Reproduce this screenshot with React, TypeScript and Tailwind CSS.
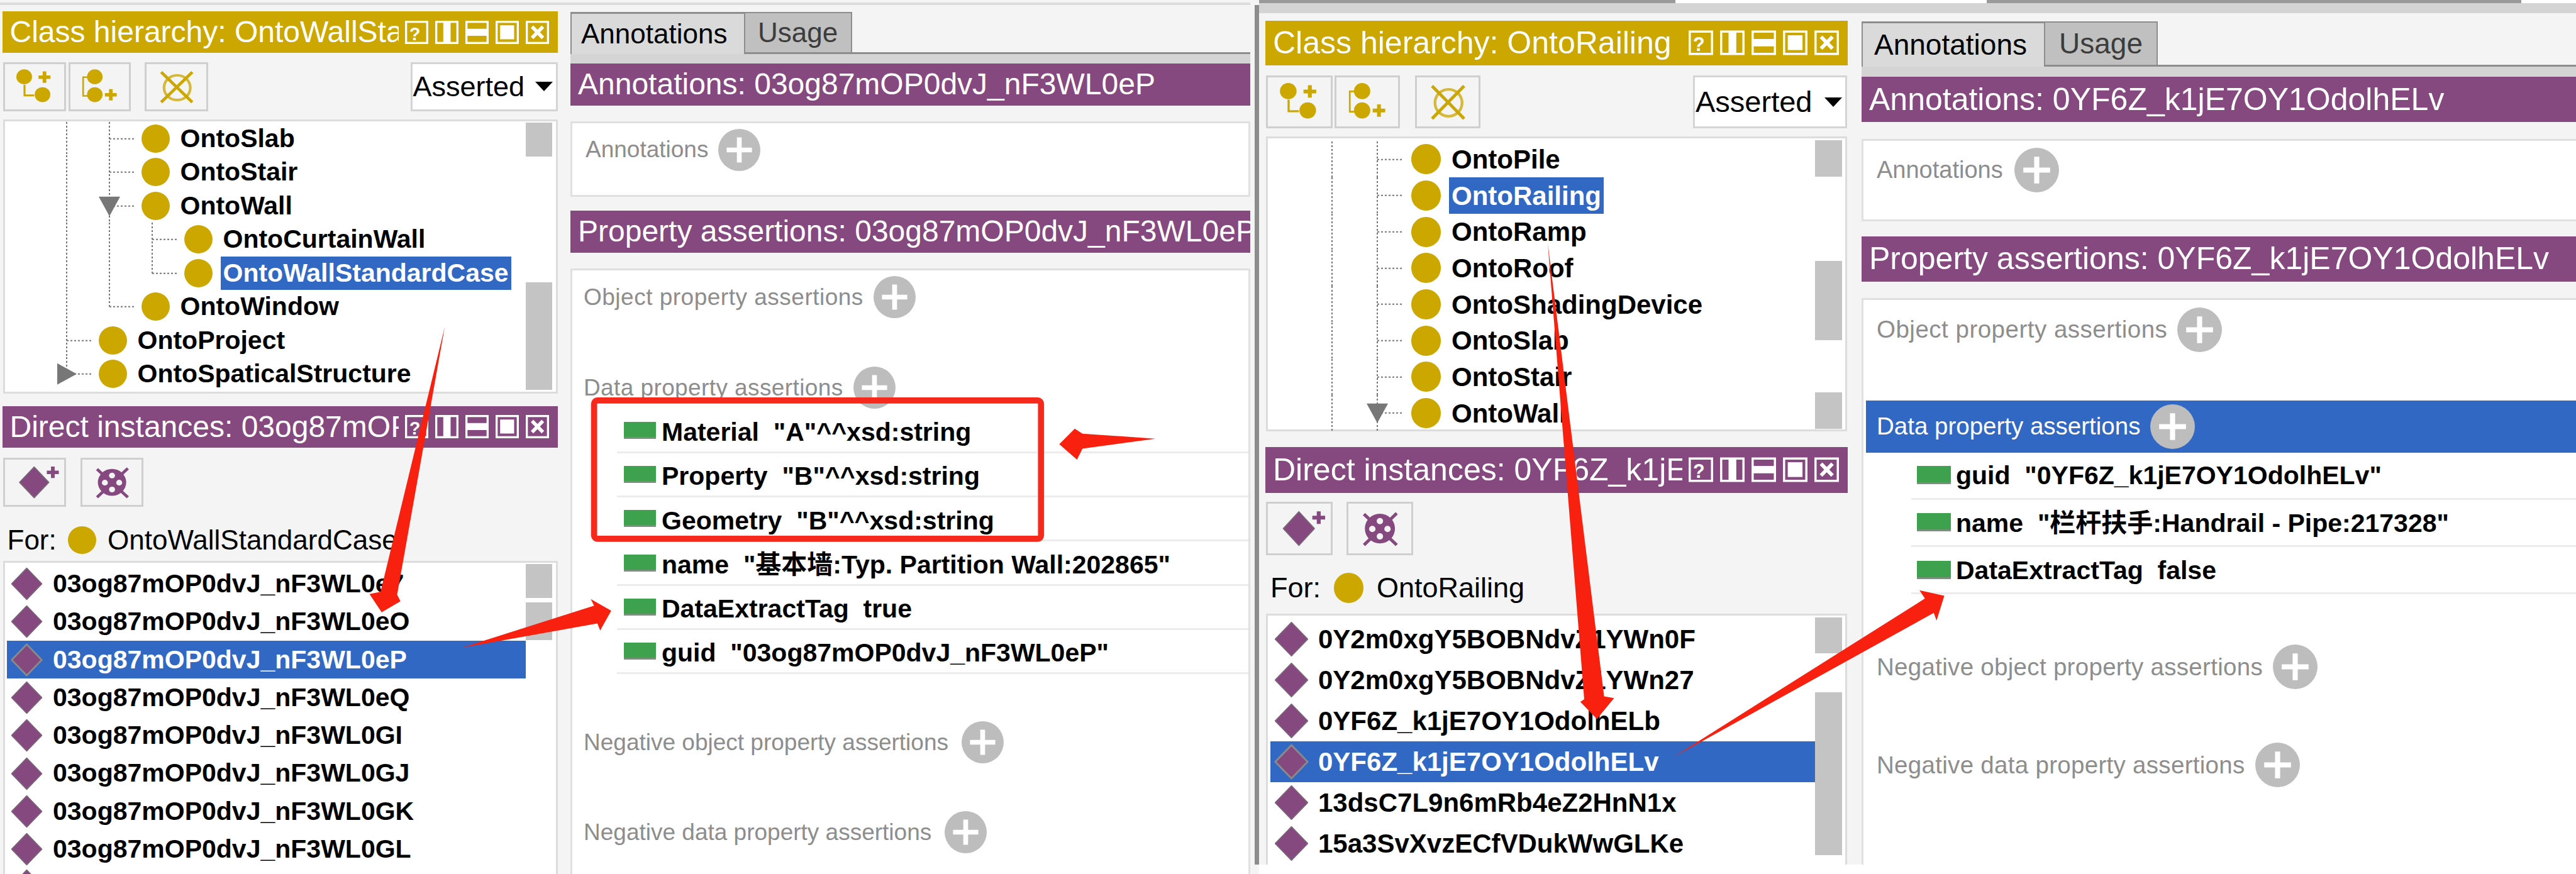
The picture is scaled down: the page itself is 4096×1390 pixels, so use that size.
import React from "react";

const GOLD = "#cca700";
const PURPLE = "#85487f";

// icons of the view bar
function ViewIcons({ size }: { size: string }) {
  const box = <rect x="6" y="6" width="121" height="121" fill="none" stroke="white" strokeWidth="12" />;
  return (
    <>
      <svg viewBox="0 0 133 133" className={size}>
        {box}
        <text x="56" y="110" fontSize="104" fontWeight="700" fill="white" textAnchor="middle" fontFamily="Liberation Sans">?</text>
      </svg>
      <svg viewBox="0 0 133 133" className={size}>
        {box}
        <rect x="46" y="6" width="42" height="121" fill="white" />
      </svg>
      <svg viewBox="0 0 133 133" className={size}>
        {box}
        <rect x="6" y="46" width="121" height="40" fill="white" />
      </svg>
      <svg viewBox="0 0 133 133" className={size}>
        {box}
        <rect x="26" y="26" width="80" height="80" fill="white" />
      </svg>
      <svg viewBox="0 0 133 133" className={size}>
        {box}
        <path d="M36 34 L98 98 M98 34 L36 98" stroke="white" strokeWidth="20" />
      </svg>
    </>
  );
}

function ViewBar({ title, className, iconSize, iconGap }: { title: string; className: string; iconSize: string; iconGap: string }) {
  return (
    <div className={`flex items-center text-white shrink-0 ${className}`}>
      <div className="flex-1 min-w-0 overflow-hidden whitespace-nowrap">{title}</div>
      <div className={`flex items-center ${iconGap}`}>
        <ViewIcons size={iconSize} />
      </div>
    </div>
  );
}

function Plus({ cx, cy, color }: { cx: number; cy: number; color: string }) {
  return <path d={`M${cx - 36} ${cy - 11} h25 v-25 h22 v25 h25 v22 h-25 v25 h-22 v-25 h-25 z`} fill={color} />;
}

function ToolButton({ className, children }: { className: string; children: React.ReactNode }) {
  return (
    <div className={`border-[3px] border-[#cfcfcf] bg-[#f4f4f4] shrink-0 ${className}`}>
      <svg viewBox="0 0 355 285" preserveAspectRatio="none" className="w-full h-full">
        {children}
      </svg>
    </div>
  );
}

const AddSub = () => (
  <>
    <path d="M117 130 V197 H175" fill="none" stroke={GOLD} strokeWidth="12" />
    <circle cx="115" cy="80" r="47" fill={GOLD} />
    <circle cx="225" cy="192" r="47" fill={GOLD} />
    <Plus cx={237} cy={82} color={GOLD} />
  </>
);
const AddSibling = () => (
  <>
    <path d="M105 82 H77 V200 H105" fill="none" stroke={GOLD} strokeWidth="10" />
    <circle cx="148" cy="80" r="47" fill={GOLD} />
    <circle cx="148" cy="192" r="47" fill={GOLD} />
    <Plus cx={245} cy={193} color={GOLD} />
  </>
);
const DeleteClass = () => (
  <>
    <circle cx="182" cy="148" r="78" fill="none" stroke="#d6b93a" strokeWidth="16" />
    <path d="M87 50 L272 240 M272 50 L87 240" stroke={GOLD} strokeWidth="18" />
  </>
);
const AddInstance = () => (
  <>
    <path d="M175 46 L263 143 L175 240 L87 143 Z" fill={PURPLE} stroke="#7a6a78" strokeWidth="6" strokeLinejoin="round" />
    <Plus cx={287} cy={80} color={PURPLE} />
  </>
);
const DeleteInstance = () => (
  <>
    <circle cx="178" cy="143" r="85" fill={PURPLE} />
    <path d="M88 60 L273 237 M273 55 L88 237" stroke={PURPLE} strokeWidth="18" />
    <circle cx="178" cy="100" r="18" fill="#f4f4f4" />
    <circle cx="135" cy="145" r="18" fill="#f4f4f4" />
    <circle cx="221" cy="145" r="18" fill="#f4f4f4" />
    <circle cx="178" cy="188" r="18" fill="#f4f4f4" />
  </>
);

function Combo({ className, textSize }: { className: string; textSize: string }) {
  return (
    <div className={`border-[3px] border-[#d4d4d4] bg-white flex items-center justify-between pl-[1px] pr-[5px] shrink-0 ${className}`}>
      <span className={textSize}>Asserted</span>
      <svg viewBox="0 0 30 16" className="w-[28px] h-[15px]">
        <path d="M0 0 H30 L15 16 Z" fill="black" />
      </svg>
    </div>
  );
}

function Scrollbar({ className, segments }: { className: string; segments: [number, number][] }) {
  return (
    <div className={`shrink-0 flex flex-col ${className}`}>
      {segments.map(([mt, h], i) => (
        <div key={i} className="bg-[#c4c4c4] w-full" style={{ marginTop: mt, height: h }} />
      ))}
    </div>
  );
}

type Guide = [number, "line" | "tee" | "end"];
type TreeItem = { label: string; indent: number; guides: Guide[]; tri?: ["open" | "closed", number]; selected?: boolean };

function Guides({ item, h }: { item: TreeItem; h: number }) {
  const mid = h / 2;
  return (
    <svg width={item.indent} height={h} className="shrink-0">
      {item.guides.map(([x, kind]) => (
        <g key={x} stroke="#777" strokeWidth="2" strokeDasharray="3 3" fill="none">
          <line x1={x} y1={0} x2={x} y2={kind === "end" ? mid : h} />
          {kind !== "line" && <line x1={x} y1={mid} x2={item.indent - 12} y2={mid} />}
        </g>
      ))}
      {item.tri && item.tri[0] === "open" && (
        <path d={`M${item.tri[1] - 17} ${mid - 15} h34 l-17 31 z`} fill="#777" />
      )}
      {item.tri && item.tri[0] === "closed" && (
        <path d={`M${item.tri[1] - 15} ${mid - 17} l31 17 l-31 17 z`} fill="#777" />
      )}
    </svg>
  );
}

function TreeRow({ item, h, rowClass, circle, gap }: { item: TreeItem; h: number; rowClass: string; circle: string; gap: string }) {
  return (
    <div className={`flex items-center whitespace-nowrap font-bold ${rowClass}`}>
      <Guides item={item} h={h} />
      <div className={`rounded-full bg-[#cca700] shrink-0 ${circle}`} />
      <div className={`h-full flex items-center px-1 ${gap} ${item.selected ? "bg-[#3168c4] text-white" : "text-black"}`}>{item.label}</div>
    </div>
  );
}

function Diamond({ className, selected }: { className: string; selected?: boolean }) {
  return (
    <svg viewBox="0 0 60 60" preserveAspectRatio="none" className={`shrink-0 ${className}`}>
      <path d="M30 3 L57 30 L30 57 L3 30 Z" fill={PURPLE} stroke={selected ? "#8a8a8a" : "#7d6079"} strokeWidth={selected ? 3 : 2} strokeLinejoin="round" />
    </svg>
  );
}

function InstanceRow({ label, selected, rowClass, icon, gap }: { label: string; selected?: boolean; rowClass: string; icon: string; gap: string }) {
  return (
    <div className={`flex items-center whitespace-nowrap font-bold ${gap} ${rowClass} ${selected ? "bg-[#3168c4] text-white" : "text-black"}`}>
      <Diamond className={icon} selected={selected} />
      <span>{label}</span>
    </div>
  );
}

function PlusCircle({ className }: { className: string }) {
  return (
    <svg viewBox="0 0 70 70" className={`shrink-0 ${className}`}>
      <circle cx="35" cy="35" r="35" fill="#bdbdbd" />
      <path d="M14 35 H56 M35 14 V56" stroke="white" strokeWidth="8" />
    </svg>
  );
}

function Section({ label, className, plus, textClass }: { label: string; className: string; plus: string; textClass?: string }) {
  return (
    <div className={`flex items-center ${className}`}>
      <span className={textClass ?? "text-[#8d8d8d]"}>{label}</span>
      <PlusCircle className={plus} />
    </div>
  );
}

function DataRow({ label, rowClass, bar, gap, textPad }: { label: string; rowClass: string; bar: string; gap: string; textPad: string }) {
  return (
    <div className={`flex items-center whitespace-pre font-bold text-black border-b-[3px] border-[#ececec] ${gap} ${rowClass}`}>
      <div className={`bg-[#3ea14e] border-b-[3px] border-[#7c8f7f] shrink-0 ${bar}`} />
      <span className={textPad}>{label}</span>
    </div>
  );
}

function TabStrip({ className, active, usage, text }: { className: string; active: string; usage: string; text: string }) {
  return (
    <div className={`flex items-stretch border-b-[3px] border-[#8d8d8d] shrink-0 ${className} ${text}`}>
      <div className={`flex items-center bg-[#dadada] border-t-[3px] border-l-[2px] border-[#8d8d8d] -mb-[3px] text-black ${active}`}>Annotations</div>
      <div className={`flex items-center bg-[#c0c0c0] border-[2px] border-[#8d8d8d] border-b-0 text-[#3c3c3c] ${usage}`}>Usage</div>
    </div>
  );
}

const leftTree: TreeItem[] = [
  { label: "OntoSlab", indent: 217, guides: [[98, "line"], [166, "tee"]] },
  { label: "OntoStair", indent: 217, guides: [[98, "line"], [166, "tee"]] },
  { label: "OntoWall", indent: 217, guides: [[98, "line"], [166, "tee"]], tri: ["open", 166] },
  { label: "OntoCurtainWall", indent: 285, guides: [[98, "line"], [166, "line"], [234, "tee"]] },
  { label: "OntoWallStandardCase", indent: 285, guides: [[98, "line"], [166, "line"], [234, "end"]], selected: true },
  { label: "OntoWindow", indent: 217, guides: [[98, "line"], [166, "end"]] },
  { label: "OntoProject", indent: 149, guides: [[98, "tee"]] },
  { label: "OntoSpaticalStructure", indent: 149, guides: [[98, "end"]], tri: ["closed", 98] },
];

const rightTree: TreeItem[] = ["OntoPile", "OntoRailing", "OntoRamp", "OntoRoof", "OntoShadingDevice", "OntoSlab", "OntoStair", "OntoWall"].map((label) => ({
  label,
  indent: 228,
  guides: [[102, "line"], [174, "tee"]] as Guide[],
  tri: label === "OntoWall" ? (["open", 174] as ["open", number]) : undefined,
  selected: label === "OntoRailing",
}));

const leftInstances = ["03og87mOP0dvJ_nF3WL0e7", "03og87mOP0dvJ_nF3WL0eO", "03og87mOP0dvJ_nF3WL0eP", "03og87mOP0dvJ_nF3WL0eQ", "03og87mOP0dvJ_nF3WL0GI", "03og87mOP0dvJ_nF3WL0GJ", "03og87mOP0dvJ_nF3WL0GK", "03og87mOP0dvJ_nF3WL0GL"];
const rightInstances = ["0Y2m0xgY5BOBNdvZ1YWn0F", "0Y2m0xgY5BOBNdvZ1YWn27", "0YF6Z_k1jE7OY1OdolhELb", "0YF6Z_k1jE7OY1OdolhELv", "13dsC7L9n6mRb4eZ2HnN1x", "15a3SvXvzECfVDukWwGLKe"];

const leftData = ['Material  "A"^^xsd:string', 'Property  "B"^^xsd:string', 'Geometry  "B"^^xsd:string', 'name  "基本墙:Typ. Partition Wall:202865"', "DataExtractTag  true", 'guid  "03og87mOP0dvJ_nF3WL0eP"'];
const rightData = ['guid  "0YF6Z_k1jE7OY1OdolhELv"', 'name  "栏杆扶手:Handrail - Pipe:217328"', "DataExtractTag  false"];

export default function App() {
  return (
    <div className="relative w-[4096px] h-[1390px] overflow-hidden flex bg-white text-black font-['Liberation_Sans','Noto_Sans_CJK_SC',sans-serif]">
      {/* first screenshot */}
      <div className="w-[2002px] h-full shrink-0 flex flex-col bg-[#f4f4f4]">
        <div className="mt-1 h-1 bg-[#dcdcdc] mr-[14px] shrink-0" />
        <div className="flex-1 min-h-0 flex">
          {/* hierarchy column */}
          <div className="w-[883px] ml-[3.5px] flex flex-col overflow-hidden shrink-0">
            <ViewBar title="Class hierarchy: OntoWallStandardCase" className="mt-[10px] h-[66px] bg-[#cca700] pl-[12px] pr-[14px] text-[48px]" iconSize="w-[37px] h-[37px]" iconGap="gap-[11px] ml-[10px]" />
            <div className="mt-[14.5px] flex h-[78px] shrink-0">
              <ToolButton className="w-[100px] ml-px"><AddSub /></ToolButton>
              <ToolButton className="w-[99px] ml-[4px]"><AddSibling /></ToolButton>
              <ToolButton className="w-[101px] ml-[22px]"><DeleteClass /></ToolButton>
              <Combo className="w-[234px] ml-auto" textSize="text-[45px]" />
            </div>
            <div className="mt-[13px] h-[436px] ml-px border-[3px] border-[#dcdcdc] bg-white flex shrink-0">
              <div className="flex-1 min-w-0 pt-[1px]">
                {leftTree.map((item) => (
                  <TreeRow key={item.label} item={item} h={53.5} rowClass="h-[53.5px] text-[41px]" circle="w-[45px] h-[45px]" gap="ml-[13px]" />
                ))}
              </div>
              <Scrollbar className="w-[42px] mr-[6px]" segments={[[2, 54], [200, 171]]} />
            </div>
            <ViewBar title="Direct instances: 03og87mOP0dvJ_nF3WL0eP" className="mt-[20px] h-[66px] bg-[#85487f] pl-[12px] pr-[14px] text-[48px]" iconSize="w-[37px] h-[37px]" iconGap="gap-[11px] ml-[10px]" />
            <div className="mt-[16px] flex h-[78px] shrink-0">
              <ToolButton className="w-[100px] ml-px"><AddInstance /></ToolButton>
              <ToolButton className="w-[100px] ml-[23px]"><DeleteInstance /></ToolButton>
            </div>
            <div className="h-[86px] pt-[20px] flex items-center shrink-0 text-[44px] whitespace-nowrap">
              <span className="ml-[8px] w-[96.5px]">For:</span>
              <div className="w-[45px] h-[44px] rounded-full bg-[#cca700] shrink-0" />
              <span className="ml-[18px]">OntoWallStandardCase</span>
            </div>
            <div className="ml-px flex-1 border-[3px] border-b-0 border-[#dcdcdc] bg-white flex overflow-hidden">
              <div className="flex-1 min-w-0 pl-[3px] pt-[4px]">
                {leftInstances.map((label, i) => (
                  <InstanceRow key={label} label={label} selected={i === 2} rowClass="h-[60.3px] text-[41px] pl-[5.5px]" icon="w-[53px] h-[55px]" gap="gap-[15px]" />
                ))}
                <div className="h-[12px] w-[53px] ml-[5.5px] overflow-hidden">
                  <Diamond className="w-[53px] h-[55px]" />
                </div>
              </div>
              <Scrollbar className="w-[42px] mr-[6px]" segments={[[2, 54], [7, 60]]} />
            </div>
          </div>

          {/* annotations column */}
          <div className="ml-[20.5px] w-[1081px] flex flex-col overflow-hidden shrink-0 text-[48px]">
            <TabStrip className="mt-[10.5px] h-[67px]" text="text-[44px]" active="w-[276px] pl-[15px]" usage="w-[172px] pl-[20px]" />
            <div className="h-[15px] bg-[#d4d4d4] shrink-0" />
            <div className="h-[67px] bg-[#85487f] text-white flex items-center pl-[12px] whitespace-nowrap overflow-hidden shrink-0">Annotations: 03og87mOP0dvJ_nF3WL0eP</div>
            <div className="mt-[25px] h-[120px] border-[3px] border-[#e0e0e0] bg-white pl-[21px] text-[37px] shrink-0">
              <Section label="Annotations" className="h-[67px] mt-[9px] gap-[16px]" plus="w-[67px] h-[67px]" />
            </div>
            <div className="mt-[22px] h-[67px] bg-[#85487f] text-white flex items-center pl-[12px] whitespace-nowrap overflow-hidden shrink-0">Property assertions: 03og87mOP0dvJ_nF3WL0eP</div>
            <div className="mt-[25px] flex-1 border-[3px] border-b-0 border-[#e0e0e0] bg-white text-[37px]">
              <Section label="Object property assertions" className="h-[66px] mt-[10px] ml-[18px] gap-[16px]" plus="w-[67px] h-[67px]" textClass="text-[#8d8d8d] tracking-[0.5px]" />
              <Section label="Data property assertions" className="h-[66px] mt-[78px] ml-[18px] gap-[16px]" plus="w-[67px] h-[67px]" textClass="text-[#8d8d8d] tracking-[0.4px]" />
              <div className="mt-px ml-[71px] text-[41px]">
                {leftData.map((label) => (
                  <DataRow key={label} label={label} rowClass="h-[70.3px] pl-[11px]" bar="w-[51px] h-[27px]" gap="gap-[9px]" textPad="pt-[7px]" />
                ))}
              </div>
              <Section label="Negative object property assertions" className="h-[66px] mt-[75px] ml-[18px] gap-[21px]" plus="w-[67px] h-[67px]" />
              <Section label="Negative data property assertions" className="h-[66px] mt-[77px] ml-[18px] gap-[21px]" plus="w-[67px] h-[67px]" />
            </div>
          </div>

          {/* window divider */}
          <div className="ml-[7px] w-[7px] bg-[#8c8c8c] mb-[15px] shrink-0" />
        </div>
      </div>

      {/* second screenshot */}
      <div className="flex-1 min-w-0 h-[1375px] flex flex-col bg-[#f4f4f4]">
        <div className="h-[5px] bg-white flex shrink-0">
          <div className="w-[662px] bg-[#9a9a9a]" />
          <div className="w-[495px]" />
          <div className="w-[850px] bg-[#9a9a9a]" />
        </div>
        <div className="h-[16px] bg-[#d4d4d4] shrink-0" />
        <div className="flex-1 min-h-0 flex">
          <div className="ml-[10px] w-[926px] flex flex-col overflow-hidden shrink-0">
            <ViewBar title="Class hierarchy: OntoRailing" className="mt-[11.5px] h-[71px] bg-[#cca700] pl-[12px] pr-[14px] text-[50px]" iconSize="w-[39px] h-[40px]" iconGap="gap-[11px] ml-[10px]" />
            <div className="mt-[16.5px] flex h-[84px] shrink-0">
              <ToolButton className="w-[106px] ml-px"><AddSub /></ToolButton>
              <ToolButton className="w-[104px] ml-[3px]"><AddSibling /></ToolButton>
              <ToolButton className="w-[104px] ml-[24px]"><DeleteClass /></ToolButton>
              <Combo className="w-[245px] ml-auto mr-px" textSize="text-[47px]" />
            </div>
            <div className="mt-[12.5px] h-[469px] mx-px border-[3px] border-[#dcdcdc] bg-white flex shrink-0">
              <div className="flex-1 min-w-0 pt-[5px]">
                {rightTree.map((item) => (
                  <TreeRow key={item.label} item={item} h={57.7} rowClass="h-[57.7px] text-[42px]" circle="w-[47px] h-[48px]" gap="ml-[13px]" />
                ))}
              </div>
              <Scrollbar className="w-[43px] mr-[5px]" segments={[[3, 58], [134, 126], [83, 58]]} />
            </div>
            <ViewBar title="Direct instances: 0YF6Z_k1jE7OY1OdolhELv" className="mt-[25px] h-[73px] bg-[#85487f] pl-[12px] pr-[14px] text-[50px]" iconSize="w-[39px] h-[40px]" iconGap="gap-[11px] ml-[10px]" />
            <div className="mt-[14px] flex h-[85px] shrink-0">
              <ToolButton className="w-[106px] ml-px"><AddInstance /></ToolButton>
              <ToolButton className="w-[106px] ml-[22px]"><DeleteInstance /></ToolButton>
            </div>
            <div className="h-[93px] pt-[11px] flex items-center shrink-0 text-[45px] whitespace-nowrap">
              <span className="ml-[8px] w-[101px]">For:</span>
              <div className="w-[47px] h-[48px] rounded-full bg-[#cca700] shrink-0" />
              <span className="ml-[21px]">OntoRailing</span>
            </div>
            <div className="mx-px flex-1 border-[3px] border-b-0 border-[#dcdcdc] bg-white flex overflow-hidden">
              <div className="flex-1 min-w-0 pl-[4px] pt-[5px]">
                {rightInstances.map((label, i) => (
                  <InstanceRow key={label} label={label} selected={i === 3} rowClass="h-[65px] text-[42px] pl-[5px]" icon="w-[57px] h-[59px]" gap="gap-[14px]" />
                ))}
              </div>
              <Scrollbar className="w-[43px] mr-[5px]" segments={[[3, 57], [62, 259]]} />
            </div>
          </div>

          <div className="ml-[22px] flex-1 min-w-0 flex flex-col overflow-hidden text-[50px]">
            <TabStrip className="mt-[12.5px] h-[72px]" text="text-[46px]" active="w-[290px] pl-[18px]" usage="w-[181px] pl-[22px]" />
            <div className="h-[16.5px] bg-[#d4d4d4] shrink-0" />
            <div className="h-[72px] bg-[#85487f] text-white flex items-center pl-[12px] whitespace-nowrap overflow-hidden shrink-0">Annotations: 0YF6Z_k1jE7OY1OdolhELv</div>
            <div className="mt-[27px] h-[131px] border-[3px] border-r-0 border-[#e0e0e0] bg-white text-[38px] shrink-0">
              <Section label="Annotations" className="h-[71px] mt-[11px] ml-[21px] gap-[18px]" plus="w-[71px] h-[71px]" />
            </div>
            <div className="mt-[23.5px] h-[72px] bg-[#85487f] text-white flex items-center pl-[12px] whitespace-nowrap overflow-hidden shrink-0">Property assertions: 0YF6Z_k1jE7OY1OdolhELv</div>
            <div className="mt-[26px] flex-1 border-l-[3px] border-t-[3px] border-[#e0e0e0] bg-white text-[38.5px]">
              <Section label="Object property assertions" className="h-[71px] mt-[12px] ml-[21px] gap-[16px]" plus="w-[71px] h-[71px]" textClass="text-[#8d8d8d] tracking-[0.5px]" />
              <Section label="Data property assertions" className="h-[83px] mt-[77px] ml-[4px] pl-[17px] gap-[16px] bg-[#3168c4]" plus="w-[71px] h-[71px]" textClass="text-white" />
              <div className="ml-[76px] text-[41px]">
                {rightData.map((label) => (
                  <DataRow key={label} label={label} rowClass="h-[75.3px] pl-[9px]" bar="w-[54px] h-[29px]" gap="gap-[8px]" textPad="pt-[3px]" />
                ))}
              </div>
              <Section label="Negative object property assertions" className="h-[72px] mt-[79px] ml-[21px] gap-[16px]" plus="w-[71px] h-[71px]" textClass="text-[#8d8d8d] tracking-[0.3px]" />
              <Section label="Negative data property assertions" className="h-[72px] mt-[84px] ml-[21px] gap-[16px]" plus="w-[71px] h-[71px]" textClass="text-[#8d8d8d] tracking-[0.3px]" />
            </div>
          </div>
        </div>
      </div>

      {/* hand-drawn red annotations, in reference pixels */}
      <svg viewBox="0 0 4657 1580" className="absolute inset-0 w-[4096px] h-[1390px] pointer-events-none">
        <rect x="1074" y="724" width="808" height="250" rx="6" fill="none" stroke="#f52a1c" strokeWidth="11" />
        <g fill="#f8200f">
          <path d="M804 591 L718 1075 L724 1087 L690 1107 L668 1074 L688 1070 Z" />
          <path d="M835 1171 L1074 1095 L1068 1083 L1105 1104 L1085 1140 L1080 1127 Z" />
          <path d="M2089 793 L1957 784 L1943 775 L1915 803 L1947 831 L1957 811 Z" />
          <path d="M2798 439 L2900 1259 L2918 1262 L2887 1300 L2857 1269 L2864 1264 Z" />
          <path d="M3025 1369 L3480 1082 L3470 1067 L3515 1077 L3501 1122 L3496 1108 Z" />
        </g>
      </svg>
    </div>
  );
}
